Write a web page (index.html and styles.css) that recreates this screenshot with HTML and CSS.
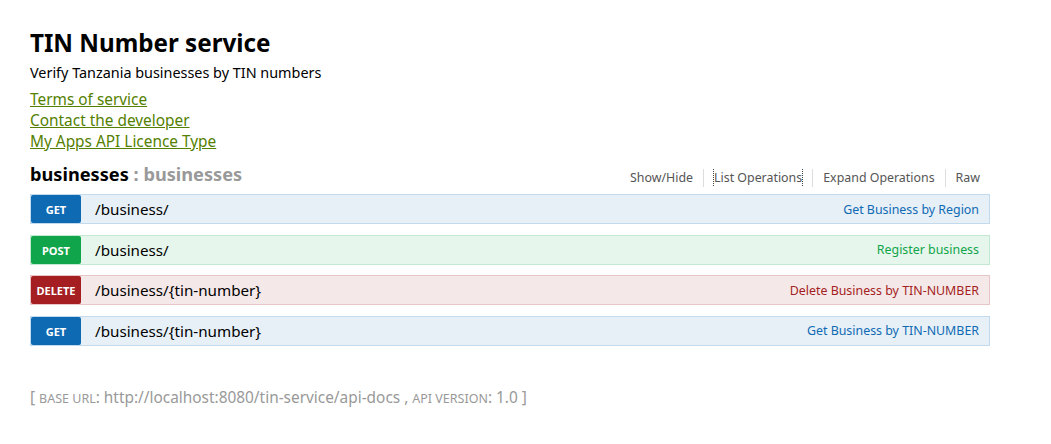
FILE: index.html
```html
<!DOCTYPE html>
<html>
<head>
<meta charset="utf-8">
<link rel="stylesheet" href="styles.css">
<title>TIN Number service</title>
</head>
<body>
<div class="wrap">
  <div class="info">
    <h1 class="info-title">TIN Number service</h1>
    <p class="info-desc">Verify Tanzania businesses by TIN numbers</p>
    <div class="info-links">
      <a href="#">Terms of service</a>
      <a href="#">Contact the developer</a>
      <a href="#">My Apps API Licence Type</a>
    </div>
  </div>

  <div class="resource">
    <div class="resource-head">
      <h2 class="resource-title">businesses <span class="resource-sub">: businesses</span></h2>
      <ul class="options">
        <li><a href="#">Show/Hide</a></li>
        <li><a href="#" class="focused">List Operations</a></li>
        <li><a href="#">Expand Operations</a></li>
        <li><a href="#">Raw</a></li>
      </ul>
    </div>

    <ul class="operations">
      <li class="op get">
        <span class="method">GET</span>
        <span class="path">/business/</span>
        <span class="summary">Get Business by Region</span>
      </li>
      <li class="op post">
        <span class="method">POST</span>
        <span class="path">/business/</span>
        <span class="summary">Register business</span>
      </li>
      <li class="op delete">
        <span class="method">DELETE</span>
        <span class="path">/business/{tin-number}</span>
        <span class="summary">Delete Business by TIN-NUMBER</span>
      </li>
      <li class="op get">
        <span class="method">GET</span>
        <span class="path">/business/{tin-number}</span>
        <span class="summary">Get Business by TIN-NUMBER</span>
      </li>
    </ul>
  </div>

  <div class="footer">
    [ <span class="sc">base url</span>: http://localhost:8080/tin-service/api-docs , <span class="sc">api version</span>: 1.0 ]
  </div>
</div>
</body>
</html>
```

FILE: styles.css
```css
html, body {
  margin: 0;
  padding: 0;
  background: #fff;
}
body {
  font-family: "Noto Sans", "Open Sans", "DejaVu Sans", sans-serif;
  color: #000;
}
.wrap {
  width: 960px;
  padding: 26px 0 0 30px;
}
.info-title {
  margin: 0;
  font-size: 24.2px;
  font-weight: bold;
  line-height: 34px;
}
.info-desc {
  margin: 3px 0 0 0;
  font-size: 14.4px;
  line-height: 20px;
}
.info-links {
  display: flex;
  flex-direction: column;
  align-items: flex-start;
  margin-top: 6px;
}
.info-links a {
  color: #547f00;
  font-size: 15.4px;
  line-height: 21px;
  text-decoration: underline;
}
.resource {
  margin-top: 7px;
}
.resource-head {
  display: flex;
  align-items: center;
  justify-content: space-between;
  height: 30px;
  margin-bottom: 5px;
}
.resource-title {
  margin: 0;
  font-size: 18.2px;
  font-weight: bold;
  color: #000;
}
.resource-sub {
  color: #999;
}
.options {
  display: flex;
  list-style: none;
  margin: 8px 0 0 0;
  padding: 0 10px 0 0;
  font-size: 12.4px;
}
.options li {
  padding: 0 10px;
  border-left: 1px solid #ddd;
  line-height: 18px;
}
.options li:first-child {
  border-left: none;
}
.options li:last-child {
  padding-right: 0;
}
.options a {
  color: #555;
  text-decoration: none;
}
.options a.focused {
  border-left: 1px dotted #444;
  border-right: 1px dotted #444;
  margin: 0 -1px;
}
.operations {
  list-style: none;
  margin: 0;
  padding: 0;
  display: flex;
  flex-direction: column;
  gap: 10px;
}
.op {
  display: flex;
  align-items: center;
  height: 28px;
  border: 1px solid;
}
.op + .op {
  margin-top: 0.5px;
}
.method {
  width: 50px;
  height: 28px;
  line-height: 29px;
  border-radius: 2px;
  color: #fff;
  font-size: 11px;
  font-weight: bold;
  text-align: center;
  flex: none;
}
.path {
  padding-left: 14px;
  font-size: 15.2px;
  color: #000;
  flex: 1;
}
.summary {
  padding-right: 10px;
  font-size: 12.4px;
}
.get { background: #e7f0f7; border-color: #c3d9ec; }
.get .method { background: #0f6ab4; }
.get .summary { color: #0f6ab4; }
.post { background: #e7f6ec; border-color: #c3e8d1; }
.post .method { background: #10a54a; }
.post .summary { color: #10a54a; }
.delete { background: #f5e8e8; border-color: #e8c6c7; }
.delete .method { background: #a41e22; }
.delete .summary { color: #a41e22; }
.footer {
  margin-top: 41px;
  font-size: 15.4px;
  color: #999;
}
.sc {
  text-transform: uppercase;
  font-size: 12.5px;
}
```
